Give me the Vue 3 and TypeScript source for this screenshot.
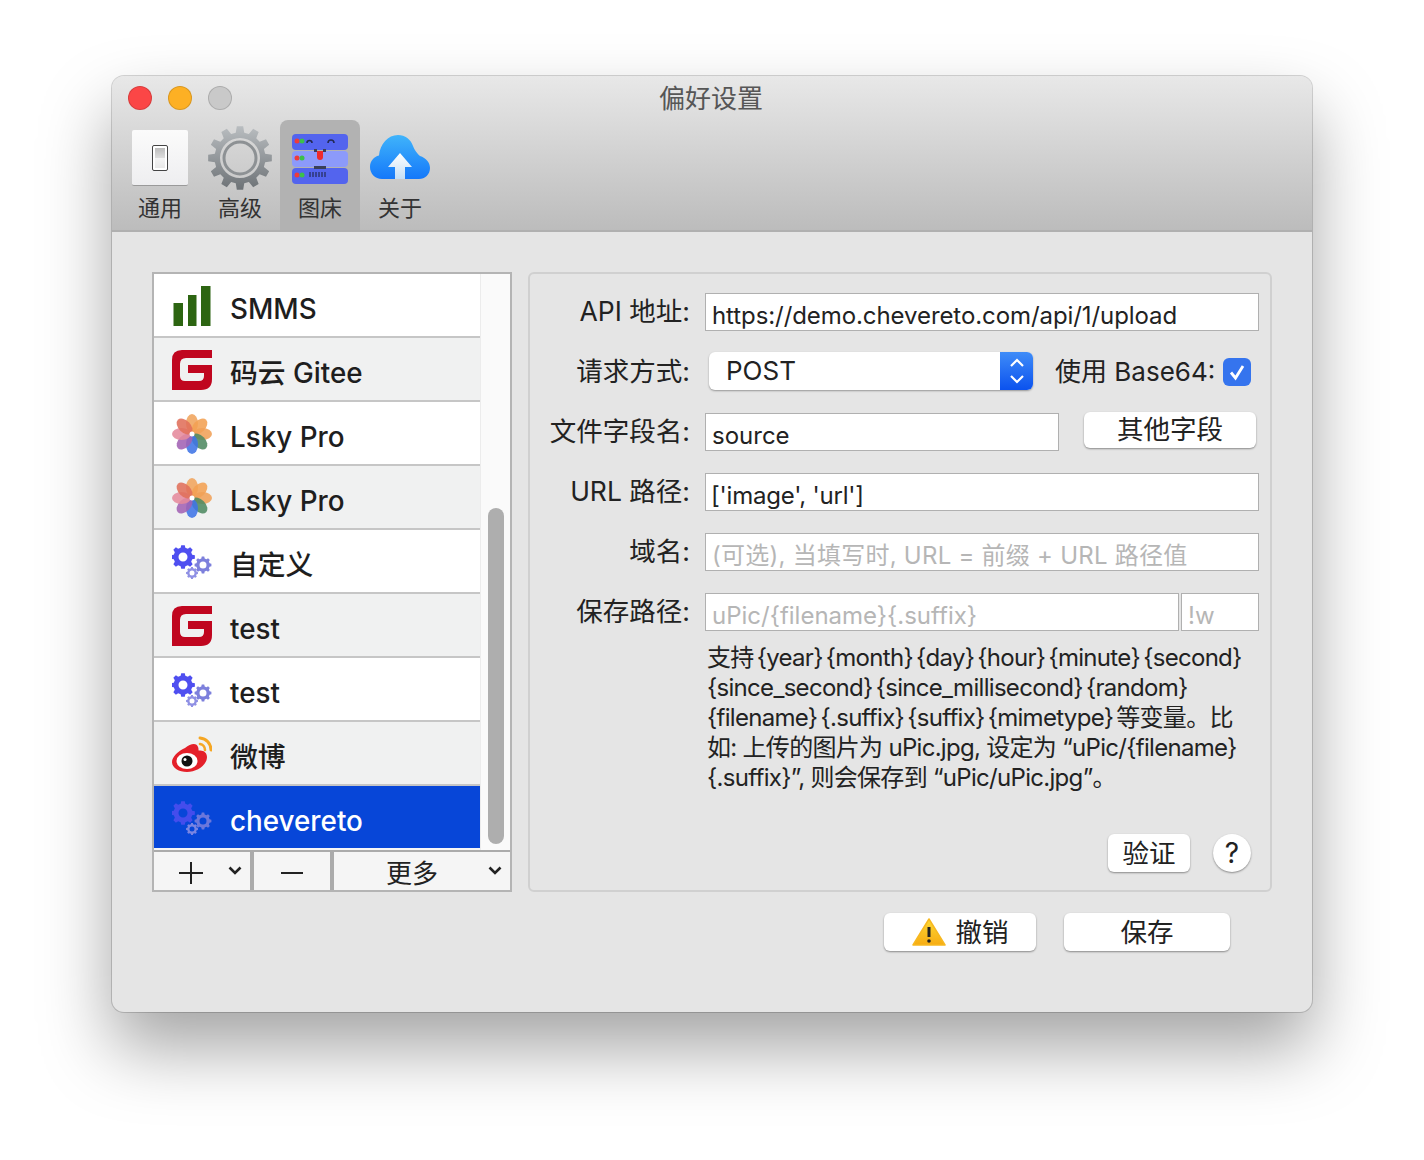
<template>
  <div class="page">
    <div class="window">
      <header class="titlebar">
        <div class="title-row">
          <div class="lights">
            <span class="light red"></span>
            <span class="light yellow"></span>
            <span class="light gray"></span>
          </div>
          <div class="title">偏好设置</div>
        </div>
        <div class="tabs">
          <div class="tab">
            <div class="tab-icon">
              <div class="switch-plate"><div class="switch"><div class="switch-in"></div></div></div>
            </div>
            <span>通用</span>
          </div>
          <div class="tab">
            <div class="tab-icon">
              <svg width="66" height="66" viewBox="0 0 66 66">
                <defs>
                  <linearGradient id="gearFill" x1="0" y1="0" x2="0" y2="1">
                    <stop offset="0" stop-color="#b9bdc0" />
                    <stop offset="1" stop-color="#6d7276" />
                  </linearGradient>
                </defs>
                <path :d="gearPath(33, 33, 32, 25.500, 12, 20)" fill="url(#gearFill)" fill-rule="evenodd" />
                <circle cx="33" cy="33" r="16" fill="none" stroke="#8d9194" stroke-width="3" />
              </svg>
            </div>
            <span>高级</span>
          </div>
          <div class="tab active">
            <div class="tab-icon">
              <svg class="server" width="56" height="50" viewBox="0 0 56 50">
                <rect x="0" y="0" width="56" height="16" rx="4" fill="#5364ee" />
                <rect x="0" y="17" width="56" height="16" rx="4" fill="#8c9afa" />
                <rect x="0" y="34" width="56" height="16" rx="4" fill="#5364ee" />
                <circle cx="5" cy="7" r="2.500" fill="#ef3b3b" /><circle cx="10" cy="7" r="2.500" fill="#3cc04a" />
                <circle cx="5" cy="24" r="2.500" fill="#ef3b3b" /><circle cx="10" cy="24" r="2.500" fill="#3cc04a" />
                <circle cx="5" cy="41" r="2.500" fill="#ef3b3b" /><circle cx="10" cy="41" r="2.500" fill="#3cc04a" />
                <path d="M15 9a2.500 2.500 0 0 1 5 0M36 9a3 3 0 0 1 6 0" fill="none" stroke="#232a55" stroke-width="1.600" />
                <rect x="22" y="15" width="3" height="3" fill="#3a3f58" />
                <rect x="31" y="15" width="3" height="3" fill="#3a3f58" />
                <rect x="22" y="32" width="12" height="3" fill="#3a3f58" />
                <path d="M25 17h6v6a3 3 0 0 1-6 0z" fill="#ee2b2b" />
                <path d="M18 38v5M21 38v5M24 38v5M27 38v5M30 38v5M33 38v5" stroke="#232a55" stroke-width="1.200" />
              </svg>
            </div>
            <span>图床</span>
          </div>
          <div class="tab">
            <div class="tab-icon">
              <svg width="60" height="46" viewBox="0 0 60 46">
                <defs>
                  <linearGradient id="cloudFill" x1="0" y1="0" x2="0" y2="1">
                    <stop offset="0" stop-color="#40b4fb" />
                    <stop offset="1" stop-color="#1478fa" />
                  </linearGradient>
                  <linearGradient id="arrowFill" x1="0" y1="0" x2="0" y2="1">
                    <stop offset="0" stop-color="#ffffff" />
                    <stop offset="1" stop-color="#c4def5" />
                  </linearGradient>
                </defs>
                <path d="M12 44C5 44 0 38.500 0 32C0 26 4 21.500 9 20.500C10 9 18 0 28 0C35 0 41 4.500 43 11C45 16 47 18 50 21C56 23 60 27.500 60 33C60 39.500 55 44 49 44Z" fill="url(#cloudFill)" />
                <path d="M30 18L42 32H35V44H25V32H18Z" fill="url(#arrowFill)" />
              </svg>
            </div>
            <span>关于</span>
          </div>
        </div>
      </header>

      <main class="content">
        <div class="columns">
          <aside class="list-box">
            <div class="list-body">
              <div class="rows">
                <div
                  v-for="(item, i) in hosts"
                  :key="i"
                  class="row"
                  :class="{ alt: i % 2 === 1, selected: i === hosts.length - 1 }"
                >
                  <svg class="row-icon" width="40" height="40" viewBox="0 0 40 40">
                    <template v-if="item.icon === 'bars'">
                      <rect x="1.500" y="17" width="9.500" height="23" fill="#2d6512" />
                      <rect x="16" y="9" width="8.500" height="31" fill="#2d6512" />
                      <rect x="29" y="0" width="9.500" height="40" fill="#2d6512" />
                    </template>
                    <template v-else-if="item.icon === 'gitee'">
                      <path d="M10 0H40V8H14Q8 8 8 14V26Q8 31 13 31H27Q32 31 32 26V23H16V15H40V29Q40 40 29 40H0V10Q0 0 10 0Z" fill="#c0061f" />
                    </template>
                    <template v-else-if="item.icon === 'flower'">
                      <ellipse
                        v-for="(c, p) in petals"
                        :key="p"
                        cx="20"
                        cy="9.500"
                        rx="6"
                        ry="9.500"
                        :fill="c"
                        fill-opacity="0.88"
                        :transform="`rotate(${p * 45} 20 20)`"
                      />
                      <circle cx="20" cy="20" r="2.500" fill="#fff" />
                    </template>
                    <template v-else-if="item.icon === 'gears'">
                      <path :d="gearPath(11, 15, 12, 9.500, 8, 4.500)" fill="#4f4ff0" fill-rule="evenodd" />
                      <path :d="gearPath(31, 23, 8.500, 6.800, 8, 3.500)" fill="#7d80dc" fill-rule="evenodd" />
                      <path :d="gearPath(20, 31, 6, 4.800, 8, 2.500)" fill="#8f90e4" fill-rule="evenodd" />
                    </template>
                    <g v-else transform="translate(0 3)">
                      <path d="M13 11C19 6 25 6 26 10C27 12 26 13.500 27 13.500C32 13 35 16 35 20C35 28 25 35 15 35C7 35 0 31 0 25C0 20 6 14 13 11Z" fill="#e4202a" />
                      <ellipse cx="15" cy="24" rx="10.500" ry="8" fill="#fff" />
                      <circle cx="15" cy="24" r="5.500" fill="#111" />
                      <circle cx="13" cy="22.500" r="1.500" fill="#fff" />
                      <path d="M28 1A12 12 0 0 1 39 13" fill="none" stroke="#f5a623" stroke-width="3" stroke-linecap="round" />
                      <path d="M28 7A6 6 0 0 1 33 13" fill="none" stroke="#f5a623" stroke-width="2.600" stroke-linecap="round" />
                    </g>
                  </svg>
                  <span class="row-label">{{ item.name }}</span>
                </div>
              </div>
              <div class="scroll-track"><div class="scroll-thumb"></div></div>
            </div>
            <div class="list-tools">
              <div class="tool tool-add">
                <svg class="glyph" width="24" height="24" viewBox="0 0 24 24"><path d="M12 1V23M0 12H24" stroke="#222" stroke-width="2" /></svg>
                <svg class="chev" width="14" height="9" viewBox="0 0 14 9"><path d="M1.500 1.500L7 7L12.500 1.500" fill="none" stroke="#222" stroke-width="2.600" /></svg>
              </div>
              <div class="tool tool-remove">
                <svg class="glyph" width="22" height="4" viewBox="0 0 22 4"><path d="M0 2H22" stroke="#222" stroke-width="2" /></svg>
              </div>
              <div class="tool tool-more">
                <span>更多</span>
                <svg class="chev" width="14" height="9" viewBox="0 0 14 9"><path d="M1.500 1.500L7 7L12.500 1.500" fill="none" stroke="#222" stroke-width="2.600" /></svg>
              </div>
            </div>
          </aside>

          <section class="panel">
            <div class="form-row">
              <label class="label">API 地址:</label>
              <div class="input url">https://demo.chevereto.com/api/1/upload</div>
            </div>
            <div class="form-row">
              <label class="label">请求方式:</label>
              <div class="select">
                <span class="select-text">POST</span>
                <span class="select-arrows">
                  <svg width="16" height="28" viewBox="0 0 16 28"><path d="M2 9L8 3L14 9M2 19L8 25L14 19" fill="none" stroke="#fff" stroke-width="2.200" /></svg>
                </span>
              </div>
              <span class="check-label">使用 Base64:</span>
              <span class="checkbox">
                <svg width="20" height="20" viewBox="0 0 20 20"><path d="M4 10.500L8.500 16L16 4" fill="none" stroke="#fff" stroke-width="2.800" /></svg>
              </span>
            </div>
            <div class="form-row">
              <label class="label">文件字段名:</label>
              <div class="input short">source</div>
              <button class="btn other">其他字段</button>
            </div>
            <div class="form-row">
              <label class="label">URL 路径:</label>
              <div class="input tight">['image', 'url']</div>
            </div>
            <div class="form-row">
              <label class="label">域名:</label>
              <div class="input placeholder domain">(可选), 当填写时, URL = 前缀 + URL 路径值</div>
            </div>
            <div class="form-row">
              <label class="label">保存路径:</label>
              <div class="input placeholder path">uPic/{filename}{.suffix}</div>
              <div class="input placeholder mark">!w</div>
            </div>
            <div class="help">
              <div v-for="(line, i) in helpLines" :key="line" :class="{ loose: i > 2 }">{{ line }}</div>
            </div>
            <div class="panel-actions">
              <button class="btn verify">验证</button>
              <button class="btn question">?</button>
            </div>
          </section>
        </div>

        <footer class="footer">
          <button class="btn cancel">
            <svg width="34" height="28" viewBox="0 0 34 28">
              <defs>
                <linearGradient id="warnFill" x1="0" y1="0" x2="0" y2="1">
                  <stop offset="0" stop-color="#fdd835" />
                  <stop offset="1" stop-color="#f7ac12" />
                </linearGradient>
              </defs>
              <path d="M17 1L33 27H1Z" fill="url(#warnFill)" stroke="#f7b820" stroke-width="1.500" stroke-linejoin="round" />
              <path d="M17 9V19" stroke="#222" stroke-width="3" />
              <circle cx="17" cy="23" r="1.800" fill="#222" />
            </svg>
            <span>撤销</span>
          </button>
          <button class="btn save">保存</button>
        </footer>
      </main>
    </div>
  </div>
</template>

<script setup lang="ts">
type HostIcon = "bars" | "gitee" | "flower" | "gears" | "weibo";

const hosts: { name: string; icon: HostIcon }[] = [
  { name: "SMMS", icon: "bars" },
  { name: "码云 Gitee", icon: "gitee" },
  { name: "Lsky Pro", icon: "flower" },
  { name: "Lsky Pro", icon: "flower" },
  { name: "自定义", icon: "gears" },
  { name: "test", icon: "gitee" },
  { name: "test", icon: "gears" },
  { name: "微博", icon: "weibo" },
  { name: "chevereto", icon: "gears" },
];

const petals = ["#f0a45c", "#f2a052", "#f0a058", "#4f8a62", "#3f74e6", "#a262b4", "#e58a9c", "#e0705a"];

const helpLines = [
  "支持 {year} {month} {day} {hour} {minute} {second}",
  "{since_second} {since_millisecond} {random}",
  "{filename} {.suffix} {suffix} {mimetype} 等变量。比",
  "如: 上传的图片为 uPic.jpg, 设定为 “uPic/{filename}",
  "{.suffix}”, 则会保存到 “uPic/uPic.jpg”。",
];

// 齿轮轮廓，hole 是中间的圆孔
const gearPath = (cx: number, cy: number, outer: number, inner: number, teeth: number, hole: number) => {
  const step = (Math.PI * 2) / teeth;
  const pts: string[] = [];
  for (let i = 0; i < teeth; i++) {
    const a = i * step - Math.PI / 2;
    const list: [number, number][] = [
      [inner, a - step * 0.32],
      [outer, a - step * 0.19],
      [outer, a + step * 0.19],
      [inner, a + step * 0.32],
    ];
    for (const [r, t] of list) {
      pts.push(`${(cx + r * Math.cos(t)).toFixed(2)} ${(cy + r * Math.sin(t)).toFixed(2)}`);
    }
  }
  const circle = `M${cx - hole} ${cy}a${hole} ${hole} 0 1 0 ${hole * 2} 0a${hole} ${hole} 0 1 0 ${-hole * 2} 0Z`;
  return `M${pts.join("L")}Z${circle}`;
};
</script>

<style>
html,
body {
  margin: 0;
  background: #fff;
}
</style>

<style scoped>
.page {
  width: 1424px;
  height: 1160px;
  padding: 76px 112px 0;
  box-sizing: border-box;
  overflow: hidden;
  background: #fff;
  font-family: Inter, "Noto Sans CJK SC", sans-serif;
  color: #222;
}

.window {
  width: 1200px;
  height: 936px;
  display: flex;
  flex-direction: column;
  border-radius: 12px;
  overflow: hidden;
  background: #e5e5e5;
  box-shadow: 0 0 0 1px rgba(0, 0, 0, 0.16), 0 36px 70px rgba(0, 0, 0, 0.36);
}

.titlebar {
  height: 156px;
  box-sizing: border-box;
  display: flex;
  flex-direction: column;
  background: linear-gradient(#e8e8e8, #bcbcbc);
  border-bottom: 2px solid #b0b0b0;
}

.title-row {
  height: 44px;
  display: flex;
  align-items: center;
  position: relative;
}

.lights {
  display: flex;
  gap: 16px;
  margin-left: 16px;
}

.light {
  width: 24px;
  height: 24px;
  border-radius: 50%;
  box-sizing: border-box;
  border: 1px solid rgba(0, 0, 0, 0.14);
}

.red { background: #fb4646; }
.yellow { background: #fdb024; }
.gray { background: #c9c9c9; }

.title {
  position: absolute;
  left: 0;
  right: 2px;
  top: 0;
  line-height: 46px;
  text-align: center;
  font-size: 26px;
  color: #565656;
}

.tabs {
  display: flex;
  margin-left: 8px;
  flex: 1;
}

.tab {
  width: 80px;
  display: flex;
  flex-direction: column;
  align-items: center;
  font-size: 22px;
  line-height: 24px;
  color: #333;
}

.tab.active {
  background: #b2b2b2;
  border-radius: 8px 8px 0 0;
}

.tab-icon {
  height: 76px;
  display: flex;
  align-items: center;
  justify-content: center;
}

.server {
  margin-top: 2px;
}

.switch-plate {
  width: 56px;
  height: 56px;
  box-sizing: border-box;
  display: flex;
  align-items: center;
  justify-content: center;
  background: linear-gradient(#fbfbfb, #eeeef0);
  border-bottom: 1px solid #9a9a9a;
  border-radius: 2px;
}

.switch {
  width: 16px;
  height: 26px;
  padding: 2px;
  box-sizing: border-box;
  background: #fff;
  border: 1px solid #444;
  border-radius: 2px;
}

.switch-in {
  height: 100%;
  background: linear-gradient(#bcbcbc 0, #dedede 50%, #f4f4f4 52%, #e8e8e8 100%);
}

.content {
  flex: 1;
  display: flex;
  flex-direction: column;
  padding: 40px 40px 0;
}

.columns {
  display: flex;
  gap: 16px;
}

.list-box {
  width: 360px;
  flex-shrink: 0;
  height: 620px;
  box-sizing: border-box;
  border: 2px solid #b4b4b4;
  display: flex;
  flex-direction: column;
  background: #f6f6f6;
}

.list-body {
  height: 576px;
  display: flex;
}

.rows {
  width: 326px;
  flex-shrink: 0;
}

.row {
  height: 64px;
  box-sizing: border-box;
  display: flex;
  align-items: center;
  padding-left: 18px;
  gap: 18px;
  background: #fff;
  border-bottom: 2px solid #c6c6c6;
  font-size: 27.800px;
  font-weight: 500;
  color: #1e1e1e;
}

.row.alt {
  background: #f0f1f1;
}

.row.selected {
  background: #0746d8;
  color: #fff;
  border-bottom-color: #f6f6f6;
}

.row.selected .row-icon {
  opacity: 0.85;
}

.row-icon {
  flex-shrink: 0;
  margin-top: 2px;
}

.row-label {
  margin-top: 7px;
  line-height: 34px;
}

.scroll-track {
  flex: 1;
  background: #fafafa;
  border-left: 1px solid #ececec;
  position: relative;
}

.scroll-thumb {
  position: absolute;
  left: 7px;
  top: 234px;
  width: 16px;
  height: 336px;
  background: #aeaeae;
  border-radius: 8px;
}

.list-tools {
  flex: 1;
  display: flex;
  border-top: 2px solid #ababab;
  font-size: 26px;
}

.tool {
  display: flex;
  align-items: center;
  justify-content: center;
  position: relative;
  background: #f5f5f5;
}

.tool .glyph {
  margin-top: 4px;
}

.tool-add {
  width: 100px;
  padding-right: 22px;
  box-sizing: border-box;
  border-right: 4px solid #ababab;
}

.tool-remove {
  width: 80px;
  box-sizing: border-box;
  border-right: 4px solid #ababab;
}

.tool-more {
  flex: 1;
  padding-right: 20px;
}

.chev {
  position: absolute;
  right: 8px;
  top: 14px;
}

.panel {
  flex: 1;
  min-width: 0;
  height: 620px;
  box-sizing: border-box;
  border: 2px solid #d0d0d0;
  border-radius: 6px;
  padding: 19px 11px 0 0;
  display: flex;
  flex-direction: column;
  gap: 22px;
  position: relative;
}

.form-row {
  height: 38px;
  display: flex;
  align-items: center;
}

.label {
  width: 160px;
  text-align: right;
  margin-right: 15px;
  margin-bottom: 6px;
  font-size: 26.500px;
  flex-shrink: 0;
}

.input {
  flex: 1;
  height: 38px;
  box-sizing: border-box;
  background: #fff;
  border: 1px solid #b0b0b0;
  font-size: 24px;
  padding: 4px 0 0 6px;
  line-height: 36px;
  white-space: nowrap;
  overflow: hidden;
  color: #222;
}

.input.url {
  letter-spacing: -0.08px;
}

.input.tight {
  letter-spacing: -0.2px;
  padding-left: 5px;
}

.input.short {
  flex: none;
  width: 354px;
}

.input.path {
  flex: none;
  width: 474px;
  margin-right: 2px;
}

.input.placeholder {
  color: #b6b6b6;
}

.input.domain {
  letter-spacing: 0.25px;
}

.select {
  width: 324px;
  height: 38px;
  margin-left: 4px;
  margin-top: -2px;
  display: flex;
  justify-content: space-between;
  background: #fff;
  border-radius: 6px;
  box-shadow: 0 1px 2px rgba(0, 0, 0, 0.35);
  overflow: hidden;
  font-size: 26px;
}

.select-text {
  margin-left: 17px;
  line-height: 38px;
}

.select-arrows {
  width: 33px;
  display: flex;
  align-items: center;
  justify-content: center;
  background: linear-gradient(#3f8cf8, #0b52ee);
}

.check-label {
  margin-left: 22px;
  margin-bottom: 6px;
  font-size: 26px;
}

.checkbox {
  width: 28px;
  height: 28px;
  margin-left: 8px;
  display: flex;
  align-items: center;
  justify-content: center;
  background: #3574ee;
  border-radius: 6px;
}

.btn {
  font-family: inherit;
  font-size: 26.500px;
  line-height: 28px;
  color: #222;
  background: #fff;
  border: none;
  border-radius: 6px;
  padding: 0 0 1px;
  box-shadow: 0 1px 2px rgba(0, 0, 0, 0.4);
}

.btn.other {
  width: 172px;
  height: 36px;
  margin-left: 25px;
  margin-top: -5px;
}

.help {
  margin: -10px 0 0 177px;
  font-size: 24px;
  letter-spacing: -0.7px;
  word-spacing: -3px;
  line-height: 30px;
  white-space: nowrap;
  color: #222;
}

.help .loose {
  word-spacing: 0;
}

.panel-actions {
  position: absolute;
  right: 19px;
  bottom: 18px;
  display: flex;
  align-items: center;
  gap: 23px;
}

.btn.verify {
  width: 82px;
  height: 38px;
}

.btn.question {
  width: 38px;
  height: 38px;
  border-radius: 50%;
  font-size: 28px;
  padding: 0;
}

.footer {
  display: flex;
  margin-top: 21px;
  padding-left: 732px;
  gap: 28px;
}

.btn.cancel {
  width: 152px;
  height: 38px;
  display: flex;
  align-items: center;
  justify-content: center;
  gap: 10px;
  padding: 0;
}

.btn.cancel span {
  margin-bottom: 1px;
}

.btn.save {
  width: 166px;
  height: 38px;
  padding-bottom: 0;
}
</style>
